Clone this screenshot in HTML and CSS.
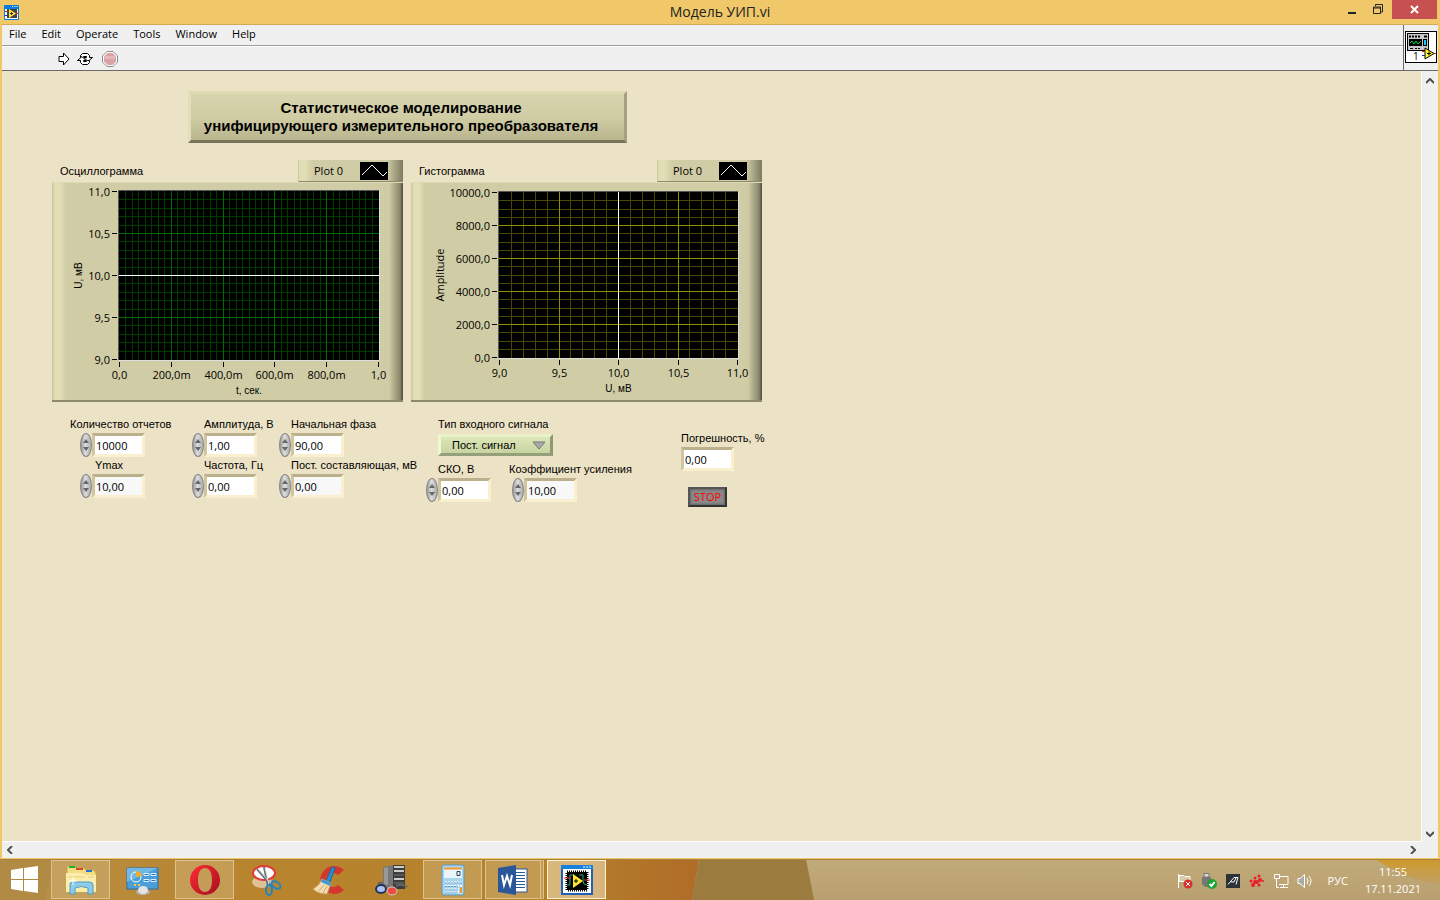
FILE: index.html
```html
<!DOCTYPE html>
<html lang="ru">
<head>
  <meta charset="utf-8">
  <title>Модель УИП.vi</title>
  <link rel="stylesheet" href="styles.css">
</head>
<body>
  <div class="window">
    <header class="titlebar">
      <svg class="app-icon" width="15" height="15" viewBox="0 0 15 15">
        <rect width="15" height="15" rx="1" fill="#0a7be0"/>
        <rect x="1" y="4" width="13" height="10" fill="#fff"/>
        <path d="M8 1.500h1M10.500 1.500h1M12.500 1.500h1" stroke="#fff"/>
        <rect x="3" y="4" width="10" height="9" fill="#444"/>
        <path d="M5 4v9l7-4.500z" fill="#ffe63a"/>
        <path d="M6 8.500h3M7.500 7v3" stroke="#333"/>
        <path d="M1 6.500h2M12 8.500h2" stroke="#e22"/><path d="M1 10.500h2" stroke="#22e"/>
      </svg>
      <h1 class="window-title">Модель УИП.vi</h1>
      <div class="window-buttons">
        <button class="win-btn" aria-label="Minimize"><svg width="8" height="12" viewBox="0 0 8 12"><path d="M0 9h8" stroke="#222" stroke-width="2"/></svg></button>
        <button class="win-btn" aria-label="Restore"><svg width="10" height="12" viewBox="0 0 10 12"><path d="M.5 3h7v6.500h-7zM0 4h8M2.500 2V.5h7V8H8" fill="none" stroke="#222"/></svg></button>
        <button class="win-btn close" aria-label="Close"><svg width="9" height="12" viewBox="0 0 9 12"><path d="M1 2l7 7M8 2L1 9" stroke="#fff" stroke-width="2"/></svg></button>
      </div>
    </header>

    <div class="client">
      <div class="bars">
        <div class="bars-left">
          <nav class="menu">
            <button>File</button>
            <button>Edit</button>
            <button>Operate</button>
            <button>Tools</button>
            <button>Window</button>
            <button>Help</button>
          </nav>
          <div class="toolbar">
            <button aria-label="Run"><svg width="12" height="14" viewBox="0 0 12 14"><path d="M1 4.500h4.500V1L11 7l-5.500 6V9.500H1z" fill="#fff" stroke="#000"/></svg></button>
            <button aria-label="Run Continuously"><svg width="16" height="14" viewBox="0 0 16 14"><path d="M3.500 5.500v-2l2-2h5l2 2v2h3l-4.500 4-4-4h2.500v-1H7l-1.500 1z" fill="#fff" stroke="#000"/><path d="M12.500 8.500v2l-2 2h-5l-2-2v-2h-3l4.500-4 4 4H6.500v1H9l1.500-1z" fill="#fff" stroke="#000"/></svg></button>
            <button aria-label="Abort"><svg width="16" height="16" viewBox="0 0 16 16"><path d="M5 .5h6L15.500 5v6L11 15.500H5L.5 11V5z" fill="#fff" stroke="#8a8a8a"/><path d="M5.500 2h5L14 5.500v5L10.500 14h-5L2 10.500v-5z" fill="#d9a3a6"/><path d="M3 5h10v3H3z" fill="#e4b9bb"/></svg></button>
          </div>
        </div>
        <div class="vi-icon">
          <svg width="32" height="32" viewBox="0 0 32 32">
            <rect x=".5" y=".5" width="31" height="31" fill="#fff" stroke="#000"/>
            <rect x="2.500" y="2.500" width="21" height="17" fill="#c8c8c8" stroke="#000"/>
            <path d="M4 5.500h2M7 5.500h2M10 5.500h2M13 5.500h2M19 5.500h3" stroke="#000" stroke-width="2"/>
            <rect x="4" y="8" width="13" height="7" fill="#000"/>
            <path d="M5 12l2-2 2 3 2-3 2 3 3-3" fill="none" stroke="#0c4" />
            <rect x="18.500" y="8.500" width="3" height="6" fill="#1cf" stroke="#000"/>
            <path d="M5 17.500h3M10 17.500h2M13 17.500h2" stroke="#000"/>
            <path d="M20 17v11l9-5.500z" fill="#ff2" stroke="#000"/>
            <path d="M22 22.500h4M24 20.500v4" stroke="#000"/>
            <path d="M17 20.500h3M29 22.500h2" stroke="#e22"/><path d="M17 24.500h3" stroke="#22e"/>
            <text x="8" y="29" class="vi-number">1</text>
          </svg>
        </div>
      </div>

      <div class="workspace">
        <main class="panel">
          <h2 class="plaque">Статистическое моделирование<br>унифицирующего измерительного преобразователя</h2>

          <div class="graphs">
            <figure class="graph">
              <div class="graph-head">
                <figcaption>Осциллограмма</figcaption>
                <div class="legend">Plot 0 <svg width="28" height="18" viewBox="0 0 28 18"><rect width="28" height="18"/><path d="M2 13L12 3l11 11 4-4" fill="none" stroke="#fff"/></svg></div>
              </div>
              <svg class="plot" id="scope" width="351" height="217" viewBox="0 0 351 217"></svg>
            </figure>
            <figure class="graph">
              <div class="graph-head">
                <figcaption>Гистограмма</figcaption>
                <div class="legend">Plot 0 <svg width="28" height="18" viewBox="0 0 28 18"><rect width="28" height="18"/><path d="M2 13L12 3l11 11 4-4" fill="none" stroke="#fff"/></svg></div>
              </div>
              <svg class="plot" id="histogram" width="351" height="217" viewBox="0 0 351 217"></svg>
            </figure>
          </div>

          <form class="controls" onsubmit="return false">
            <div class="column count">
              <div class="field">
                <label for="count">Количество отчетов</label>
                <div class="numeric"><span class="spin"></span><input id="count" value="10000"></div>
              </div>
              <div class="field">
                <label class="inset" for="ymax">Ymax</label>
                <div class="numeric"><span class="spin"></span><input id="ymax" class="shaded" value="10,00"></div>
              </div>
            </div>
            <div class="column wave">
              <div class="field">
                <label for="amp">Амплитуда, В</label>
                <div class="numeric"><span class="spin"></span><input id="amp" value="1,00"></div>
              </div>
              <div class="field">
                <label for="freq">Частота, Гц</label>
                <div class="numeric"><span class="spin"></span><input id="freq" value="0,00"></div>
              </div>
            </div>
            <div class="column phase">
              <div class="field">
                <label for="phase">Начальная фаза</label>
                <div class="numeric"><span class="spin"></span><input id="phase" value="90,00"></div>
              </div>
              <div class="field">
                <label for="offset">Пост. составляющая, мВ</label>
                <div class="numeric"><span class="spin"></span><input id="offset" class="shaded" value="0,00"></div>
              </div>
            </div>
            <div class="column signal">
              <div class="field">
                <label for="type">Тип входного сигнала</label>
                <div class="ring">
                  <select id="type"><option>Пост. сигнал</option></select>
                  <svg width="14" height="9" viewBox="0 0 14 9"><path d="M1 1h12L7 8z" fill="#aaa" stroke="#777"/></svg>
                </div>
              </div>
              <div class="pair">
                <div class="field">
                  <label for="sko">СКО, В</label>
                  <div class="numeric"><span class="spin"></span><input id="sko" value="0,00"></div>
                </div>
                <div class="field gain">
                  <label for="gain">Коэффициент усиления</label>
                  <div class="numeric"><span class="spin"></span><input id="gain" class="shaded" value="10,00"></div>
                </div>
              </div>
            </div>
            <div class="column result">
              <div class="field">
                <label for="error">Погрешность, %</label>
                <div class="numeric"><input id="error" value="0,00" readonly></div>
              </div>
              <button class="stop">STOP</button>
            </div>
          </form>
        </main>
        <div class="scroll-v">
          <svg width="8" height="6" viewBox="0 0 8 6"><path d="M0 5l4-4 4 4" fill="none" stroke="#505050" stroke-width="2"/></svg>
          <svg width="8" height="6" viewBox="0 0 8 6"><path d="M0 1l4 4 4-4" fill="none" stroke="#505050" stroke-width="2"/></svg>
        </div>
      </div>
      <div class="scroll-h">
        <svg width="6" height="8" viewBox="0 0 6 8"><path d="M5 0L1 4l4 4" fill="none" stroke="#505050" stroke-width="2"/></svg>
        <svg width="6" height="8" viewBox="0 0 6 8"><path d="M1 0l4 4-4 4" fill="none" stroke="#505050" stroke-width="2"/></svg>
      </div>
    </div>
  </div>

  <footer class="taskbar">
    <svg class="wallpaper" viewBox="0 0 1440 41" preserveAspectRatio="none">
      <defs>
        <linearGradient id="wood"><stop offset="0" stop-color="#b98e42"/><stop offset=".3" stop-color="#b8842d"/><stop offset=".75" stop-color="#b5832c"/><stop offset="1" stop-color="#b06c28"/></linearGradient>
        <linearGradient id="sand" x2="0" y2="1"><stop offset="0" stop-color="#c2ab7a"/><stop offset="1" stop-color="#b89f6f"/></linearGradient>
        <linearGradient id="glow" x2="0" y2="1"><stop offset="0" stop-color="#cf9a2c"/><stop offset="1" stop-color="#bfa066"/></linearGradient>
      </defs>
      <rect width="1440" height="41" fill="url(#sand)"/>
      <path d="M0 0h54L46 41H0z" fill="#b18a44"/>
      <path d="M54 0h645l-7 41H46z" fill="url(#wood)"/>
      <path d="M699 0h107l8 41H692z" fill="#9c7c3e"/>
      <path d="M1375 0h65v26q-35-6-65-26z" fill="url(#glow)"/>
      <path d="M0 .5h1440" stroke="#a9803a"/>
    </svg>
    <div class="tasks">
      <button class="start" aria-label="Start"><svg width="28" height="27" viewBox="0 0 28 27"><path d="M0 4l12-2v11H0zM13 2l14-2v13H13zM0 14h12v11L0 23zM13 14h14v13l-14-2z" fill="#fff"/></svg></button>
      <button class="task open" aria-label="Explorer"><svg width="34" height="32" viewBox="0 0 34 32">
        <path d="M3 4q0-2 2-2h5l2 2h8l2 2h8l2 3v18H3z" fill="#f3dc82" stroke="#c9a640"/><path d="M5 3h6" stroke="#1b3" stroke-width="2"/><path d="M12 5h7" stroke="#d43" stroke-width="2"/><path d="M22 7h6" stroke="#27c" stroke-width="2"/>
        <path d="M2 9h17l3 2h10v17H2z" fill="#fbeeac"/><path d="M4 13h17M24 13h6" stroke="#e7cf74"/><path d="M6 30V20q0-2 3-2h16q4 0 4 3v9h-5v-6q-7-3-13 0v6z" fill="#8ecbe8" stroke="#4b9cc8"/><path d="M9 13v8M5 17h8" stroke="#fff"/></svg></button>
      <button class="task" aria-label="Control Panel"><svg width="34" height="32" viewBox="0 0 34 32">
        <rect x="1" y="4" width="31" height="21" fill="#4a9fd8" stroke="#2a6ea8"/><path d="M1 4h31L1 18z" fill="#72b8e6"/><circle cx="10" cy="13" r="5" fill="none" stroke="#fff"/><path d="M10 13V7q5 0 6 5z" fill="#f7a928"/><path d="M18 9.500h5v2h-5zM25 9.500h5v2h-5zM18 15.500h5v2h-5zM25 15.500h5v2h-5z" fill="#1f78bc" stroke="#def"/><path d="M8 21h2M12 21h2" stroke="#ffc34a" stroke-width="2"/><ellipse cx="17" cy="28" rx="7" ry="3" fill="#b3b3b3"/><ellipse cx="17" cy="26" rx="5" ry="4" fill="#e4e4e4"/></svg></button>
      <button class="task open" aria-label="Opera"><svg width="32" height="32" viewBox="0 0 32 32"><defs><linearGradient id="opera" x2="1" y2="1"><stop offset="0" stop-color="#ff2b36"/><stop offset="1" stop-color="#a40f1f"/></linearGradient></defs><path fill="url(#opera)" fill-rule="evenodd" d="M16 1a15 15 0 1 0 0 30a15 15 0 0 0 0-30zm0 3c5 0 7 5 7 12s-2 12-7 12-7-5-7-12S11 4 16 4z"/></svg></button>
      <button class="task" aria-label="Snipping Tool"><svg width="34" height="32" viewBox="0 0 34 32"><ellipse cx="12" cy="18" rx="10" ry="6" fill="#dfc198"/><ellipse cx="14" cy="9" rx="11" ry="7" fill="#fff" stroke="#e03a3a" stroke-width="2"/><path d="M7 5l15 17M14 3l4 19" stroke="#5e6a74" stroke-width="2"/><path d="M8 5l14 16M15 4l4 17" stroke="#d8dee2"/><ellipse cx="26" cy="21" rx="5" ry="3" transform="rotate(35 26 21)" fill="none" stroke="#1c86c6" stroke-width="2"/><ellipse cx="19" cy="26" rx="3" ry="5" fill="none" stroke="#1c86c6" stroke-width="2"/></svg></button>
      <button class="task" aria-label="CCleaner"><svg width="34" height="32" viewBox="0 0 34 32"><path d="M32 6A14 14 0 1 0 32 26l-6-5a7 7 0 1 1 0-10z" fill="#d4372e"/><path d="M20 3l3 1-5 14-4-1z" fill="#2a8fd0" stroke="#16679f"/><path d="M10 15l9 4-4 11Q6 30 1 25q6-3 9-10z" fill="#f5ddb0" stroke="#c9a269"/><path d="M10 15l9 4-1 3-9-4z" fill="#3a9ad6"/><path d="M12 21l-5 6M15 22l-4 7" stroke="#cfa874"/></svg></button>
      <button class="task" aria-label="Server"><svg width="34" height="32" viewBox="0 0 34 32"><path d="M9 3l10-2v23L9 22z" fill="#777"/><path d="M10 4l4-1v18l-4-1z" fill="#999"/><path d="M19 1h12v24H19z" fill="#3d3d3d"/><path d="M20 3h10M20 7h10M20 15h10" stroke="#ccc" stroke-width="2"/><path d="M20 11h10M20 19h10" stroke="#777"/><path d="M4 20q1-2 5-1M22 22q6-3 11 1" fill="none" stroke="#666" stroke-width="2"/><ellipse cx="7" cy="25" rx="5" ry="4" fill="#a9c4ee" stroke="#23325c" stroke-width="2"/><ellipse cx="18" cy="27" rx="5" ry="4" fill="#f04b43" stroke="#cfcfcf"/></svg></button>
      <button class="task open" aria-label="Calculator"><svg width="34" height="32" viewBox="0 0 34 32"><rect x="6" y="1" width="22" height="30" rx="2" fill="#a8d4ee" stroke="#5a9cc4"/><rect x="8" y="4" width="18" height="10" fill="#e9f5fb"/><path d="M8 4.500h18" stroke="#f49a2d" stroke-width="2"/><path d="M21 7.500h3v4h-3z" fill="none" stroke="#345"/><path d="M9 18.500h17M9 22h17M9 25.500h17M9 28.500h17" stroke="#fff" stroke-width="2" stroke-dasharray="2 1"/><path d="M9 19h17M9 22.500h13M9 26h13M9 29h13" stroke="#5a9cc4" stroke-dasharray="2 1"/><path d="M25 23v6" stroke="#f49a2d" stroke-width="2"/></svg></button>
      <button class="task open stacked" aria-label="Word"><svg width="32" height="32" viewBox="0 0 32 32"><rect x="16" y="5" width="14" height="23" fill="#fff" stroke="#2b579a"/><path d="M19 8.500h9M19 11.500h9M19 14.500h9M19 17.500h9M19 20.500h9M19 23.500h9" stroke="#2b579a"/><path d="M1 4l18-3v30L1 28z" fill="#2b579a"/><path d="M5 11l2 10 3-9 3 9 2-10" fill="none" stroke="#fff" stroke-width="2"/></svg></button>
      <button class="task open active" aria-label="LabVIEW"><svg width="32" height="30" viewBox="0 0 32 30"><rect x="1" y="1" width="30" height="28" fill="#fff" stroke="#1c62b8" stroke-width="2"/><path d="M0 2h32" stroke="#1681e0" stroke-width="4"/><path d="M22 2h2M25 2h2M28 2h2" stroke="#fff"/><path d="M6 7h20v18H6z" fill="#000" stroke="#000" stroke-width="3" stroke-dasharray="1 1"/><path d="M6 20h3V10h4M18 10h4v6q0 4 4 4" fill="none" stroke="#2a7"/><path d="M3 13h7M23 15h6" stroke="#e33"/><path d="M12 9v14l10-7z" fill="#ffe52e"/><path d="M13 16h4M15 14v4" stroke="#000"/></svg></button>
    </div>
    <div class="tray">
      <svg width="16" height="16" viewBox="0 0 16 16"><path d="M1.500 1v14" stroke="#fff"/><path d="M2 2.500h5l1 1h5v6H8l-1-1H2z" fill="#d9ccae" stroke="#fff"/><circle cx="11" cy="11" r="4.500" fill="#d82f2f"/><path d="M9 9l4 4M13 9l-4 4" stroke="#fff"/></svg>
      <svg width="16" height="16" viewBox="0 0 16 16"><path d="M3 .5h5V4H3z" fill="#ddd" stroke="#777"/><path d="M1 4h9v7l-3 3H4l-3-3z" fill="#777"/><circle cx="11" cy="11" r="5" fill="#1da335"/><path d="M8.500 11l2 2 3-4" fill="none" stroke="#fff" stroke-width="2"/></svg>
      <svg width="16" height="16" viewBox="0 0 16 16"><rect x="1" y="1" width="14" height="14" fill="#2b3238"/><path d="M3 11.500l6-7h4l-2 7M6 9h3l2-4" fill="none" stroke="#fff"/></svg>
      <svg width="16" height="16" viewBox="0 0 16 16"><g fill="#ea1f2d"><ellipse cx="7" cy="9" rx="3" ry="2"/><circle cx="2" cy="8" r="1.500"/><circle cx="4" cy="12" r="2"/><circle cx="6" cy="5" r="1.500"/><circle cx="10" cy="3" r="1.500"/><circle cx="11" cy="7" r="2"/><circle cx="14" cy="8" r="1"/><circle cx="10" cy="12" r="1.500"/></g></svg>
      <svg width="16" height="16" viewBox="0 0 16 16"><path d="M7 3.500h8v8H6M10.500 12v2M7 14.500h8M1.500 1.500h5v4h-5zM3.500 6v8.500H6" fill="none" stroke="#fff"/></svg>
      <svg width="16" height="16" viewBox="0 0 16 16"><path d="M1 5.500h2L7.500 1.500v13L3 10.500H1z" fill="#aaa" stroke="#fff"/><path d="M10 5q2 3 0 6M12 3q4 5 0 10" fill="none" stroke="#fff"/></svg>
      <span class="lang">РУС</span>
      <div class="clock"><time>11:55</time><time>17.11.2021</time></div>
    </div>
  </footer>
  <script src="script.js"></script>
</body>
</html>
```

FILE: styles.css
```css
* {
  box-sizing: border-box;
}

body {
  margin: 0;
  height: 100vh;
  display: flex;
  flex-direction: column;
  font: 11px/14px "Open Sans", sans-serif;
  color: #000;
  overflow: hidden;
}

svg {
  display: block;
  flex: none;
}

button {
  font: inherit;
  color: inherit;
  background: none;
  border: 0;
  padding: 0;
}

.window {
  flex: 1;
  min-height: 0;
  display: flex;
  flex-direction: column;
  background: #f0c869;
  padding: 0 2px 1px;
}

/* title bar */
.titlebar {
  display: grid;
  grid-template-columns: 1fr auto 1fr;
  height: 25px;
  align-items: center;
  border-bottom: 1px solid #d3a953;
}

.app-icon {
  margin-left: 2px;
}

.window-title {
  margin: 0;
  font-size: 14px;
  line-height: 24px;
  font-weight: normal;
  color: #222;
}

.window-buttons {
  display: flex;
  justify-content: flex-end;
  align-self: start;
}

.win-btn {
  width: 26px;
  height: 19px;
  display: flex;
  align-items: center;
  justify-content: center;
}

.close {
  width: 45px;
  margin-left: 1px;
  margin-right: 1px;
  background: #c75050;
}

.client {
  flex: 1;
  min-height: 0;
  display: flex;
  flex-direction: column;
  background: #f0f0f0;
}

/* menu and toolbar */
.bars {
  display: flex;
  height: 46px;
  border-bottom: 1px solid #696969;
}

.bars-left {
  flex: 1;
}

.menu {
  display: flex;
  gap: 15px;
  height: 21px;
  padding-left: 7px;
  border-bottom: 1px solid #a0a0a0;
}

.menu button {
  height: 18px;
}

.toolbar {
  display: flex;
  align-items: center;
  gap: 7px;
  height: 24px;
  padding-left: 56px;
  border-top: 1px solid #fff;
}

.toolbar button:last-child {
  margin-left: 2px;
}

.vi-icon {
  border-left: 1px solid #696969;
  padding: 6px 1px 0;
}

.vi-number {
  font-size: 10px;
}

.workspace {
  flex: 1;
  min-height: 0;
  display: flex;
}

.scroll-v {
  width: 16px;
  padding: 7px 4px 5px;
  display: flex;
  flex-direction: column;
  justify-content: space-between;
}

.scroll-h {
  height: 16px;
  padding: 0 22px 0 5px;
  display: flex;
  align-items: center;
  justify-content: space-between;
}

/* front panel */
.panel {
  flex: 1;
  padding: 20px 50px;
  background: #ece2c5;
  border-right: 1px solid #fff;
  border-bottom: 1px solid #fff;
}

.plaque {
  width: 439px;
  margin: 0 0 17px 136px;
  padding: 5px 21px 5px 8px;
  border: 3px solid;
  border-color: #dedab1 #a5a17e #77745a #e2dfb8;
  background: linear-gradient(#d8d5ae, #d0cca4 50%, #b9b58e);
  font: bold 15px/18px "Liberation Sans", Arial, sans-serif;
  text-align: center;
}

.graphs {
  display: flex;
  gap: 8px;
}

.graph {
  width: 351px;
  margin: 0;
}

.graph-head {
  display: flex;
  justify-content: space-between;
  height: 22px;
  padding-left: 8px;
}

figcaption,
.field label,
.ring select {
  font: 11px/14px "Liberation Sans", Arial, sans-serif;
}

figcaption {
  padding-top: 4px;
}

.legend {
  width: 105px;
  display: flex;
  align-items: center;
  justify-content: space-between;
  padding: 0 15px;
  background: linear-gradient(90deg, #dedcb2 0, #e2dfb5 6px, #d0cca5 14px, #d0cca5 88px, #77745c 105px);
  border-left: 1px solid #ccc8a0;
  border-bottom: 1px solid #8d8a6c;
}

.plot {
  box-sizing: content-box;
  background: linear-gradient(90deg, #c9c59d 0, #e2dfb5 3px, #e2dfb5 8px, #d0cca5 14px, #d0cca5 337px, #8a866a 348px, #4c4a3b 351px);
  border-top: 1px solid #dedcb2;
  border-bottom: 2px solid #8d8a6c;
}

.plot text {
  font-size: 11px;
}

.plot .axis-name {
  font: 10px "Liberation Sans", Arial, sans-serif;
}

/* controls */
.controls {
  display: flex;
  margin: 15px 0 0 18px;
}

.column {
  display: flex;
  flex-direction: column;
}

.count {
  width: 122px;
}

.wave {
  width: 87px;
}

.phase {
  width: 147px;
}

.signal {
  width: 255px;
  gap: 6px;
}

.field label {
  display: block;
  height: 15px;
  white-space: nowrap;
}

.wave label,
.phase label,
.signal label {
  padding-left: 12px;
}

.field label.inset {
  padding-left: 25px;
}

.count .numeric {
  margin-left: 10px;
}

.numeric {
  display: flex;
  align-items: center;
  height: 26px;
}

.spin {
  width: 12px;
  height: 24px;
  border: 1px solid #858585;
  border-radius: 50%;
  background: linear-gradient(90deg, #999, #ddd 45%, #aaa);
  display: flex;
  flex-direction: column;
  align-items: center;
  justify-content: center;
  gap: 4px;
}

.spin::before,
.spin::after {
  content: "";
  border: 3px solid transparent;
}

.spin::before {
  border-top-width: 0;
  border-bottom: 4px solid #666;
}

.spin::after {
  border-bottom-width: 0;
  border-top: 4px solid #666;
}

.numeric input {
  width: 53px;
  height: 24px;
  padding: 0 1px;
  border: 3px solid;
  border-color: #bab08c #faefcf #faefcf #cfc5a1;
  border-radius: 0;
  background: #fff;
  font: 11px/16px "Open Sans", sans-serif;
}

.numeric .shaded {
  background: #f8f8f8;
}

.ring {
  position: relative;
  width: 115px;
  margin: 2px 0 0 12px;
}

.ring select {
  appearance: none;
  display: block;
  width: 100%;
  height: 22px;
  padding: 0 11px;
  border: 3px solid;
  border-color: #e9f2c4 #8f9a74 #93a07a #eff8cc;
  border-radius: 0;
  background: linear-gradient(#dce6b6, #c8d3a2);
  color: #000;
}

.ring svg {
  position: absolute;
  right: 7px;
  top: 7px;
  pointer-events: none;
}

.pair {
  display: flex;
}

.pair .field {
  width: 83px;
}

.pair .gain label {
  padding-left: 0;
}

.gain .numeric {
  margin-left: 3px;
}

.result {
  padding-top: 14px;
}

.stop {
  width: 39px;
  height: 20px;
  margin: 15px 0 0 7px;
  border: 2px solid;
  border-color: #555 #333 #333 #555;
  background: #888;
  box-shadow: inset 0 0 2px 1px #666;
  color: #f00;
  line-height: 16px;
}

/* taskbar */
.taskbar {
  position: relative;
  height: 41px;
  display: flex;
  justify-content: space-between;
  color: #fff;
}

.wallpaper {
  position: absolute;
  width: 100%;
  height: 41px;
  z-index: -1;
}

.tasks {
  display: flex;
  align-items: center;
  gap: 3px;
}

.start {
  width: 48px;
  padding-left: 11px;
}

.task {
  width: 59px;
  height: 39px;
  display: flex;
  align-items: center;
  justify-content: center;
}

.open {
  border: 1px solid #dcc28c;
  background: rgba(215, 190, 140, 0.4);
}

.stacked {
  border-right: 4px double #dcc28c;
}

.active {
  border: 1px solid #fff3d6;
  background: rgba(240, 220, 180, 0.6);
}

.tray {
  display: flex;
  align-items: center;
  gap: 8px;
  padding: 2px 19px 0 0;
}

.lang {
  margin-left: 7px;
}

.clock {
  display: flex;
  flex-direction: column;
  align-items: center;
  gap: 3px;
  margin-left: 9px;
}
```

FILE: script.js
```js
var SVG = "http://www.w3.org/2000/svg";

function add(parent, name, attrs, text) {
  var el = document.createElementNS(SVG, name);
  for (var key in attrs) el.setAttribute(key, attrs[key]);
  if (text) el.textContent = text;
  parent.appendChild(el);
}

function line(svg, x1, y1, x2, y2, color) {
  add(svg, "path", { d: "M" + x1 + " " + y1 + "L" + x2 + " " + y2, stroke: color });
}

function drawPlot(id, p) {
  var svg = document.getElementById(id);
  var right = p.x + p.w, bottom = p.y + p.h, i, pos;
  add(svg, "rect", { x: p.x, y: p.y, width: p.w, height: p.h, fill: "#000" });

  // minor grid first, then major lines on top of it
  [[p.minorX, p.minorY, p.minor], [p.xTicks.length - 1, p.yTicks.length - 1, p.major]].forEach(function (g) {
    for (i = 1; i < g[0]; i++) {
      pos = Math.round(p.x + (p.w - 1) * i / g[0]) + 0.5;
      line(svg, pos, p.y, pos, bottom, g[2]);
    }
    for (i = 1; i < g[1]; i++) {
      pos = Math.round(p.y + (p.h - 1) * i / g[1]) + 0.5;
      line(svg, p.x, pos, right, pos, g[2]);
    }
  });

  p.xTicks.forEach(function (label, n) {
    var x = Math.round(p.x + (p.w - 1) * n / (p.xTicks.length - 1)) + 0.5;
    line(svg, x, bottom + 2, x, bottom + 7, "#000");
    add(svg, "text", { x: x, y: bottom + 19, "text-anchor": "middle" }, label);
  });
  p.yTicks.forEach(function (label, n) {
    var y = Math.round(p.y + (p.h - 1) * n / (p.yTicks.length - 1)) + 0.5;
    line(svg, p.x - 7, y, p.x - 2, y, "#000");
    add(svg, "text", { x: p.x - 9, y: y + 4, "text-anchor": "end" }, label);
  });

  add(svg, "path", { d: "M" + (p.x - 0.5) + " " + bottom + "V" + (p.y - 0.5) + "H" + right, fill: "none", stroke: "#555" });
  add(svg, "path", { d: "M" + p.x + " " + (bottom + 0.5) + "H" + (right + 0.5) + "V" + p.y, fill: "none", stroke: "#ddd" });

  if (p.level === "x") line(svg, p.x, p.y + p.h / 2, right, p.y + p.h / 2, "#fff");
  else line(svg, p.x + p.w / 2, p.y, p.x + p.w / 2, bottom, "#fff");

  add(svg, "text", { x: p.x + p.w / 2, y: bottom + 34, "text-anchor": "middle", "class": "axis-name" }, p.xName);
  add(svg, "text", {
    transform: "translate(" + p.nameX + " " + (p.y + p.h / 2) + ") rotate(-90)",
    "text-anchor": "middle", "class": p.nameClass
  }, p.yName);
}

drawPlot("scope", {
  x: 67, y: 8, w: 260, h: 169, minorX: 40, minorY: 20,
  minor: "#003c00", major: "#006c00", level: "x",
  xTicks: ["0,0", "200,0m", "400,0m", "600,0m", "800,0m", "1,0"],
  yTicks: ["11,0", "10,5", "10,0", "9,5", "9,0"],
  xName: "t, сек.", yName: "U, мВ", nameX: 30, nameClass: "axis-name"
});

drawPlot("histogram", {
  x: 88, y: 9, w: 239, h: 166, minorX: 20, minorY: 20,
  minor: "#484800", major: "#909000", level: "y",
  xTicks: ["9,0", "9,5", "10,0", "10,5", "11,0"],
  yTicks: ["10000,0", "8000,0", "6000,0", "4000,0", "2000,0", "0,0"],
  xName: "U, мВ", yName: "Amplitude", nameX: 33, nameClass: ""
});
```
